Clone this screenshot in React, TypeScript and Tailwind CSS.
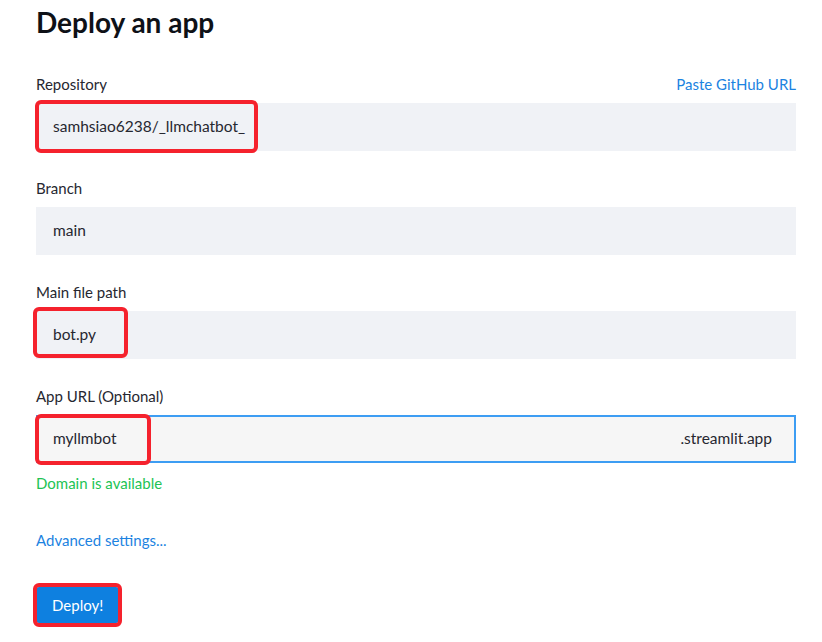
import type { ReactNode } from 'react';

function Highlight({ className }: { className: string }) {
  return <div className={`pointer-events-none absolute rounded-[6px] border-4 border-[#f5222d] ${className}`} />;
}

function Field({ label, right, children }: { label: string; right?: ReactNode; children: ReactNode }) {
  return (
    <div className="mb-[27px]">
      <div className="mb-2 flex h-[21px] items-center justify-between text-[15px] text-[#262730]">
        <span>{label}</span>
        {right}
      </div>
      {children}
    </div>
  );
}

export default function App() {
  return (
    <div
      className="min-h-screen w-[822px] bg-white pl-9 pr-[26px] pt-1 text-[#262730]"
      style={{ fontFamily: 'Lato, "Noto Sans", sans-serif' }}
    >
      <h1 className="mb-[34px] h-9 text-[28px] font-bold leading-9 text-[#0e1117]">Deploy an app</h1>

      <Field label="Repository" right={<span className="text-[#1c83e1]">Paste GitHub URL</span>}>
        <div className="relative flex h-12 items-center bg-[#f0f2f6] pl-[17px] text-[15.5px]">
          samhsiao6238/_llmchatbot_
          <Highlight className="-left-px -top-[3px] h-[53px] w-[223px]" />
        </div>
      </Field>

      <Field label="Branch">
        <div className="flex h-12 items-center bg-[#f0f2f6] pl-[17px] text-[15.5px]">main</div>
      </Field>

      <Field label="Main file path">
        <div className="relative flex h-12 items-center bg-[#f0f2f6] pl-[17px] text-[15.5px]">
          bot.py
          <Highlight className="-left-[3px] -top-1 h-[51px] w-[95px]" />
        </div>
      </Field>

      <div className="mb-2 flex h-[21px] items-center text-[15px]">App URL (Optional)</div>
      <div className="relative flex h-12 items-center justify-between border-2 border-[#3d9df3] bg-[#f6f6f6] pl-[15px] pr-[22px] text-[15.5px]">
        <span>myllmbot</span>
        <span>.streamlit.app</span>
        <Highlight className="-left-[3px] -top-[3px] h-[51px] w-[116px]" />
      </div>
      <div className="mt-[10px] flex h-[21px] items-center text-[15px] text-[#21c354]">Domain is available</div>

      <div className="mt-9 flex h-[21px] items-center text-[15px] text-[#1c83e1]">Advanced settings...</div>

      <div className="relative mt-[36px] inline-flex">
        <button className="flex h-[36px] items-center rounded-[3px] bg-[#0e80e0] px-4 text-[15px] text-white">
          Deploy!
        </button>
        <Highlight className="-left-[3px] -top-1 h-[44px] w-[89px]" />
      </div>
    </div>
  );
}
